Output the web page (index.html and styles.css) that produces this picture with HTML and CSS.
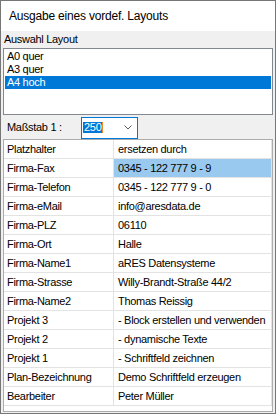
FILE: index.html
```html
<html>
	<head>
		<title>Ausgabe eines vordef. Layouts</title>
		<link rel="stylesheet" href="styles.css">
	</head>
	<body>
		<div class="window">
			<div class="title">Ausgabe eines vordef. Layouts</div>
			<div class="group-label">Auswahl Layout</div>
			<div class="listbox">
				<div class="item">A0 quer</div>
				<div class="item">A3 quer</div>
				<div class="item selected">A4 hoch</div>
			</div>
			<div class="scale-row">
				<span class="scale-label">Maßstab 1 :</span>
				<div class="combo">
					<span class="combo-sel">250</span><span class="caret"></span>
					<svg class="chevron" width="8" height="5" viewBox="0 0 8 5"><path d="M0.5 0.5 L4 4 L7.5 0.5" fill="none" stroke="#5a5a5a" stroke-width="1"/></svg>
				</div>
			</div>
			<div class="grid">
				<div class="cell key">Platzhalter</div><div class="cell val">ersetzen durch</div>
				<div class="cell key">Firma-Fax</div><div class="cell val active">0345 - 122 777 9 - 9</div>
				<div class="cell key">Firma-Telefon</div><div class="cell val">0345 - 122 777 9 - 0</div>
				<div class="cell key">Firma-eMail</div><div class="cell val">info@aresdata.de</div>
				<div class="cell key">Firma-PLZ</div><div class="cell val">06110</div>
				<div class="cell key">Firma-Ort</div><div class="cell val">Halle</div>
				<div class="cell key">Firma-Name1</div><div class="cell val">aRES Datensysteme</div>
				<div class="cell key">Firma-Strasse</div><div class="cell val">Willy-Brandt-Straße 44/2</div>
				<div class="cell key">Firma-Name2</div><div class="cell val">Thomas Reissig</div>
				<div class="cell key">Projekt 3</div><div class="cell val">- Block erstellen und verwenden</div>
				<div class="cell key">Projekt 2</div><div class="cell val">- dynamische Texte</div>
				<div class="cell key">Projekt 1</div><div class="cell val">- Schriftfeld zeichnen</div>
				<div class="cell key">Plan-Bezeichnung</div><div class="cell val">Demo Schriftfeld erzeugen</div>
				<div class="cell key">Bearbeiter</div><div class="cell val">Peter Müller</div>
			</div>
		</div>
	</body>
</html>
```

FILE: styles.css
```css
* {
	box-sizing: border-box;
}
body {
	margin: 0;
	padding: 0;
	background-color: #fff;
	font-family: "Liberation Sans", Arial, sans-serif;
	font-size: 11px;
	letter-spacing: -0.3px;
	color: #000;
}

.window {
	width: 276px;
	height: 414px;
	border: 1px solid #767676;
	background-color: #f0f0f0;
	display: flex;
	flex-direction: column;
}

.title {
	height: 30px;
	line-height: 30px;
	padding-left: 8px;
	background-color: #fff;
	font-size: 12px;
	letter-spacing: -0.2px;
}

.group-label {
	height: 17px;
	line-height: 17px;
	padding-left: 3px;
}

.listbox {
	margin: 0 2px;
	height: 67px;
	padding: 1px;
	border: 1px solid #828790;
	background-color: #fff;
}
.item {
	height: 13px;
	line-height: 13px;
	padding-left: 2px;
}
.item.selected {
	background-color: #0078d7;
	color: #fff;
}

.scale-row {
	display: flex;
	align-items: flex-start;
	height: 24px;
}
.scale-label {
	width: 80px;
	padding-left: 6px;
	line-height: 24px;
}
.combo {
	margin-top: 2px;
	width: 57px;
	height: 22px;
	border: 1px solid #0078d7;
	background-color: #fff;
	display: flex;
	align-items: center;
	padding-left: 1px;
}
.combo-sel {
	background-color: #0078d7;
	color: #fff;
	line-height: 11px;
	height: 11px;
	padding: 0 1px 0 1px;
	margin-top: -1px;
}
.caret {
	width: 1px;
	height: 11px;
	margin-top: -1px;
	background-color: #f08a24;
}
.chevron {
	margin-left: auto;
	margin-right: 5px;
	margin-top: -2px;
}

.grid {
	margin: 0 2px 1px 2px;
	flex: 1;
	border: 1px solid #acacac;
	background-color: #fff;
	display: grid;
	grid-template-columns: 110px 158px;
	grid-auto-rows: 19px;
	align-content: start;
}
.cell {
	height: 19px;
	line-height: 18px;
	border-bottom: 1px solid #e3e3e3;
	border-right: 1px solid #e3e3e3;
	white-space: nowrap;
	overflow: hidden;
}
.key {
	padding-left: 3px;
}
.val {
	padding-left: 4px;
}
.val.active {
	background-color: #99c9ef;
}
```
